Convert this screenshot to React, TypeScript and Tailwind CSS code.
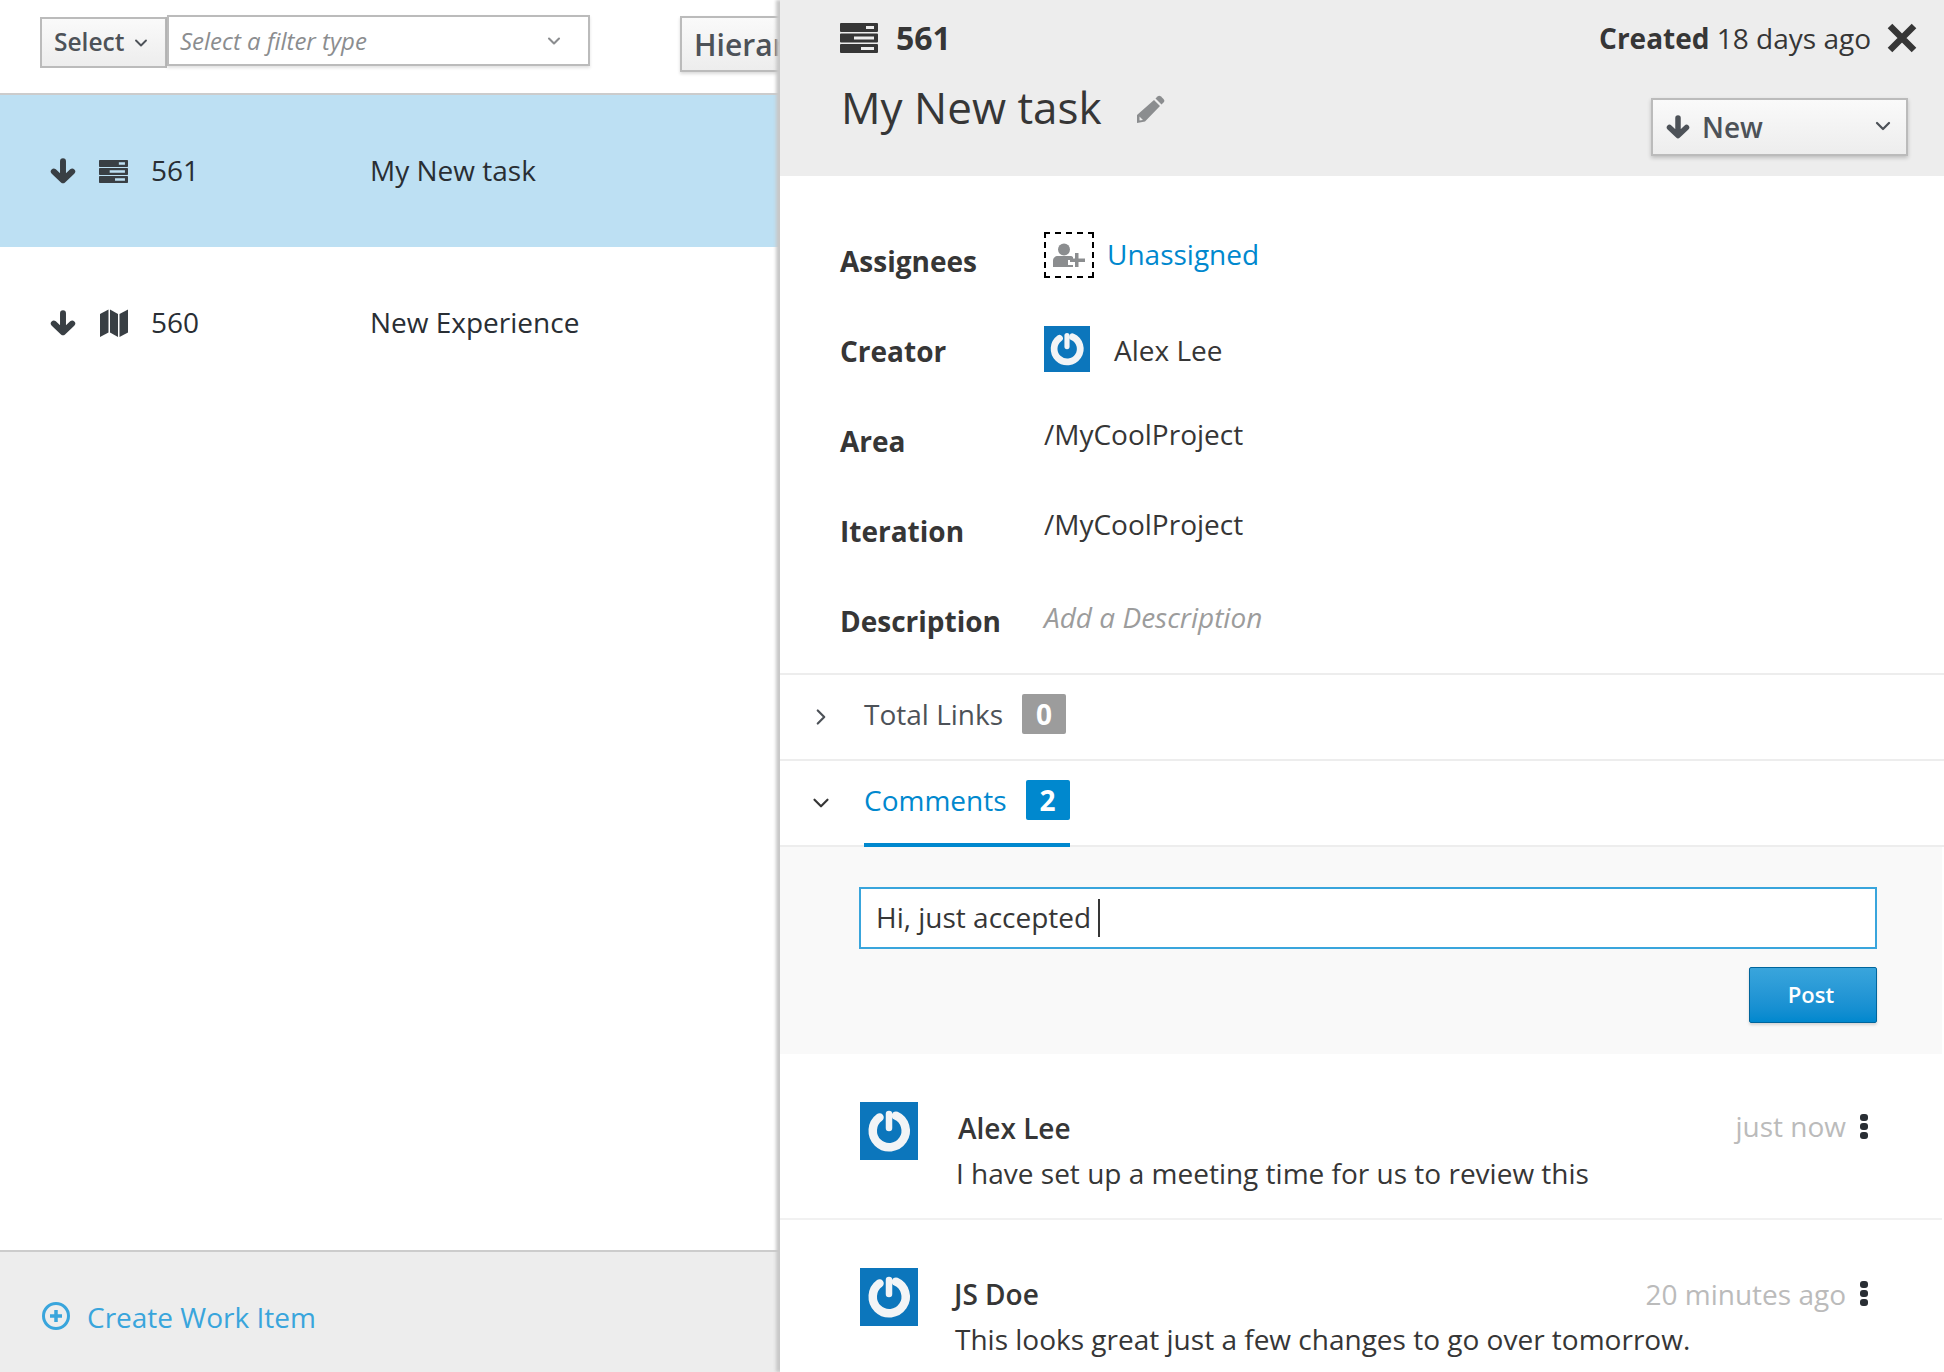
import { ChevronDown, ChevronRight } from "lucide-react";

function ServerIcon({ className }: { className?: string }) {
  return (
    <svg viewBox="0 0 38 30" className={className} fill="currentColor">
      <path fillRule="evenodd" d="M1 0h36a1 1 0 0 1 1 1v7a1 1 0 0 1-1 1H1a1 1 0 0 1-1-1V1a1 1 0 0 1 1-1zm25 3v3h8V3z" />
      <path fillRule="evenodd" d="M1 10.500h36a1 1 0 0 1 1 1v7a1 1 0 0 1-1 1H1a1 1 0 0 1-1-1v-7a1 1 0 0 1 1-1zm13 3v3h20v-3z" />
      <path fillRule="evenodd" d="M1 21h36a1 1 0 0 1 1 1v7a1 1 0 0 1-1 1H1a1 1 0 0 1-1-1v-7a1 1 0 0 1 1-1zm20 3v3h13v-3z" />
    </svg>
  );
}

function ArrowDownIcon({ className }: { className?: string }) {
  return (
    <svg viewBox="0 0 24 24" className={className} fill="none" stroke="currentColor" strokeWidth="5.5" strokeLinecap="round" strokeLinejoin="round">
      <path d="M12 3v17M3.500 12.500 12 20.500l8.500-8" />
    </svg>
  );
}

function MapIcon({ className }: { className?: string }) {
  return (
    <svg viewBox="0 0 28 28" className={className} fill="currentColor">
      <path d="M0 5 8.500.5v23L0 28z" />
      <path d="M10 .5 18 5v23l-8-4.500z" />
      <path d="M19.500 5 28 .5v23L19.500 28z" />
    </svg>
  );
}

function PencilIcon({ className }: { className?: string }) {
  return (
    <svg viewBox="0 0 28 28" className={className} fill="currentColor">
      <path d="M20.500 1.500a2.500 2.500 0 0 1 3.500 0l2.500 2.500a2.500 2.500 0 0 1 0 3.500l-2 2-6-6z" />
      <path fillRule="evenodd" d="M17 5l6 6L8 26.500 0 28v-8zM2.500 21.500v4l3.500-.5z" />
    </svg>
  );
}

function Avatar({ className }: { className?: string }) {
  return (
    <div className={`flex items-center justify-center bg-[#0c76bc] shrink-0 ${className}`}>
      <svg viewBox="0 0 58 58" className="w-full h-full blur-[0.4px]" fill="none" stroke="#f2f4f6" strokeLinecap="round">
        <path d="M21 14.500a16.500 16.500 0 1 0 16.500 0" strokeWidth="8.500" transform="rotate(-6 29 29)" />
        <path d="M29 12v14" strokeWidth="6.500" />
      </svg>
    </div>
  );
}

function UserPlusIcon() {
  return (
    <svg viewBox="0 0 32 24" className="w-[32px] h-[24px]" fill="#8b8d8f">
      <circle cx="11" cy="6.500" r="6" />
      <path d="M0 24v-6c0-3 2-5 5-5h12c1.500 0 2.500.5 3 1v3h-5v5h5v2z" />
      <path d="M22 10h3.500v5.500H32V19h-6.500v5H22v-5h-5v-3.500h5z" />
    </svg>
  );
}

function Kebab() {
  return (
    <div className="flex flex-col gap-[2px] w-[8px] shrink-0">
      <span className="h-[7px] w-[8px] rounded-[3px] bg-[#292e34]" />
      <span className="h-[7px] w-[8px] rounded-[3px] bg-[#292e34]" />
      <span className="h-[7px] w-[8px] rounded-[3px] bg-[#292e34]" />
    </div>
  );
}

const workItems = [
  { id: "561", title: "My New task", selected: true },
  { id: "560", title: "New Experience", selected: false },
];

function DetailRow({ label, children }: { label: string; children: React.ReactNode }) {
  return (
    <div className="flex items-center h-[90px]">
      <div className="w-[204px] text-[28px] font-bold text-[#363636]">{label}</div>
      {children}
    </div>
  );
}

function Comment({ name, time, body, nameClass, bodyClass, timeClass, rowClass }: { name: string; time: string; body: string; nameClass: string; bodyClass: string; timeClass: string; rowClass: string }) {
  return (
    <div className={`flex pl-[80px] pr-[74px] pt-[48px] mr-[2px] shrink-0 ${rowClass}`}>
      <Avatar className="w-[58px] h-[58px]" />
      <div className="flex-1 min-w-0">
        <div className="flex items-center justify-between h-[50px] mt-[1px]">
          <div className={`text-[28px] font-semibold text-[#363636] ${nameClass}`}>{name}</div>
          <div className={`flex items-center gap-[14px] ${timeClass}`}>
            <span className="text-[28px] text-[#bbbbbb]">{time}</span>
            <Kebab />
          </div>
        </div>
        <div className={`text-[28px] leading-[38px] text-[#363636] mt-[1px] ${bodyClass}`}>{body}</div>
      </div>
    </div>
  );
}

export default function App() {
  return (
    <div className="flex w-[1944px] h-[1372px] overflow-hidden bg-white text-[#363636] font-['Open_Sans',sans-serif]">
      <div className="flex flex-col w-[780px] shrink-0 overflow-hidden">
        <div className="flex items-start h-[95px] pl-[40px] border-b-2 border-[#cccccc] shrink-0">
          <button className="flex items-center gap-[7px] h-[51px] w-[127px] mt-[17px] pl-[12px] border-2 border-[#bbbbbb] bg-gradient-to-b from-[#fafafa] to-[#ededed] text-[24.500px] font-semibold text-[#4d5258] shrink-0">
            Select
            <ChevronDown size={20} strokeWidth={2.25} className="shrink-0" />
          </button>
          <div className="flex items-center justify-between h-[51px] w-[423px] mt-[15px] pl-[11px] pr-[24px] border-2 border-[#bbbbbb] bg-white shadow-[0_2px_3px_rgba(0,0,0,0.12)] text-[24px] italic text-[#8b8d8f] shrink-0">
            Select a filter type
            <ChevronDown size={20} strokeWidth={2.5} />
          </div>
          <button className="h-[56px] w-[200px] ml-[90px] mt-[16px] pl-[12px] text-left border-2 border-[#bbbbbb] bg-gradient-to-b from-[#fafafa] to-[#ededed] shadow-[0_2px_3px_rgba(0,0,0,0.15)] text-[30px] font-semibold text-[#4d5258] shrink-0">
            Hierarchy
          </button>
        </div>

        {workItems.map((item) => (
          <div key={item.id} className={`flex items-center h-[152px] shrink-0 pl-[50px] text-[#292e34] ${item.selected ? "bg-[#bde0f3]" : "bg-white"}`}>
            <ArrowDownIcon className="w-[26px] h-[26px] text-[#393f44]" />
            <div className="w-[29px] flex justify-center ml-[23px] text-[#393f44]">
              {item.selected ? <ServerIcon className="w-[29px] h-[23px]" /> : <MapIcon className="w-[28px] h-[28px]" />}
            </div>
            <div className="w-[219px] ml-[23px] text-[28px] mt-[-2px]">{item.id}</div>
            <div className="text-[28px] mt-[-2px]">{item.title}</div>
          </div>
        ))}

        <div className="mt-auto flex items-center gap-[17px] h-[122px] pl-[42px] pt-[9px] border-t-2 border-[#cccccc] bg-[#ededed] text-[#39a5dc] text-[28px] shrink-0">
          <svg viewBox="0 0 28 28" className="w-[28px] h-[28px] mt-[-1px]" fill="none" stroke="currentColor">
            <circle cx="14" cy="14" r="12.500" strokeWidth="3" />
            <path d="M14 8v12M8 14h12" strokeWidth="3.500" />
          </svg>
          Create Work Item
        </div>
      </div>

      <div className="relative z-10 flex flex-col flex-1 min-w-0 bg-white shadow-[-4px_0_3px_#c8c8c8]">
        <div className="flex justify-between h-[176px] bg-[#ededed] pl-[60px] pr-[27px] shrink-0">
          <div>
            <div className="flex items-center gap-[18px] h-[38px] mt-[19px] text-[#363636]">
              <ServerIcon className="w-[38px] h-[30px]" />
              <span className="text-[32px] font-bold">561</span>
            </div>
            <div className="flex items-center mt-[20px] ml-[1px]">
              <span className="text-[44px] leading-[60px] text-[#363636]">My New task</span>
              <PencilIcon className="w-[28px] h-[28px] ml-[35px] mt-[4px] text-[#8b8d8f]" />
            </div>
          </div>
          <div className="flex flex-col items-end">
            <div className="flex items-center h-[40px] mt-[18px] gap-[16px]">
              <span className="text-[28px] text-[#363636]">
                <span className="font-bold">Created</span> 18 days ago
              </span>
              <svg viewBox="0 0 30 30" className="w-[30px] h-[30px]" fill="none" stroke="#363636" strokeWidth="6.500">
                <path d="M3 3l24 24M27 3 3 27" />
              </svg>
            </div>
            <div className="flex items-center justify-between w-[257px] h-[58px] mt-[40px] mr-[9px] pl-[13px] pr-[11px] border-2 border-[#bbbbbb] bg-gradient-to-b from-[#fafafa] to-[#ededed] shadow-[0_2px_4px_rgba(0,0,0,0.2)] text-[#4d5258]">
              <span className="flex items-center gap-[12px] text-[28px] font-semibold">
                <ArrowDownIcon className="w-[24px] h-[24px]" />
                New
              </span>
              <ChevronDown size={24} strokeWidth={2.25} className="mt-[-3px]" />
            </div>
          </div>
        </div>

        <div className="h-[499px] pt-[40px] pl-[60px] border-b-2 border-[#ededed] shrink-0">
          <DetailRow label="Assignees">
            <div className="flex items-center gap-[13px] mt-[-13px]">
              <div className="flex items-center justify-center w-[50px] h-[46px] border-2 border-dashed border-black">
                <UserPlusIcon />
              </div>
              <span className="text-[28px] text-[#0088ce] mt-[-2px]">Unassigned</span>
            </div>
          </DetailRow>
          <DetailRow label="Creator">
            <Avatar className="w-[46px] h-[46px] mt-[-5px]" />
            <span className="text-[28px] ml-[24px] mt-[-3px]">Alex Lee</span>
          </DetailRow>
          <DetailRow label="Area">
            <span className="text-[28px] mt-[-14px]">/MyCoolProject</span>
          </DetailRow>
          <DetailRow label="Iteration">
            <span className="text-[28px] mt-[-14px]">/MyCoolProject</span>
          </DetailRow>
          <DetailRow label="Description">
            <span className="text-[28px] italic text-[#9c9c9c] mt-[-8px]">Add a Description</span>
          </DetailRow>
        </div>

        <div className="flex items-center h-[86px] border-b-2 border-[#ededed] text-[#4d5258] shrink-0">
          <ChevronRight size={26} strokeWidth={2} className="ml-[28px] mt-[-1px]" />
          <span className="text-[28px] ml-[30px] mt-[-6px]">Total Links</span>
          <span className="flex items-center justify-center w-[44px] h-[40px] ml-[19px] mt-[-6px] rounded-[2px] bg-[#9c9c9c] text-white text-[28px] font-bold">0</span>
        </div>

        <div className="relative flex items-center h-[86px] border-b-2 border-[#ededed] shrink-0">
          <ChevronDown size={26} strokeWidth={2} className="ml-[28px] mt-[-1px] text-[#363636]" />
          <div className="flex items-center ml-[30px] text-[#0088ce]">
            <span className="text-[28px] mt-[-6px]">Comments</span>
            <span className="flex items-center justify-center w-[44px] h-[40px] ml-[19px] mt-[-6px] rounded-[2px] bg-[#0088ce] text-white text-[28px] font-bold">2</span>
          </div>
          <div className="absolute left-[84px] bottom-[-2px] w-[206px] h-[4px] bg-[#0088ce]" />
        </div>

        <div className="h-[207px] bg-[#f9f9f9] pt-[40px] pl-[79px] pr-[65px] mr-[2px] shrink-0">
          <div className="flex items-center h-[62px] pl-[15px] border-2 border-[#39a5dc] bg-white text-[28px] text-[#363636]">
            <span className="mt-[-2px]">Hi, just accepted</span>
            <span className="w-[2px] h-[38px] ml-[7px] bg-[#363636]" />
          </div>
          <div className="flex justify-end mt-[18px]">
            <button className="w-[128px] h-[56px] pr-[4px] pb-[2px] rounded-[2px] border border-[#00659c] bg-gradient-to-b from-[#39a5dc] to-[#0088ce] text-white text-[22px] font-semibold shadow-[0_2px_3px_rgba(0,0,0,0.15)]">
              Post
            </button>
          </div>
        </div>

        <Comment
          name="Alex Lee"
          time="just now"
          body="I have set up a meeting time for us to review this"
          nameClass="ml-[40px]"
          bodyClass="ml-[38px]"
          timeClass="mt-[-4px]"
          rowClass="h-[166px] border-b-2 border-[#f1f1f1]"
        />
        <Comment
          name="JS Doe"
          time="20 minutes ago"
          body="This looks great just a few changes to go over tomorrow."
          nameClass="ml-[36px]"
          bodyClass="ml-[37px]"
          timeClass="mt-[-1px]"
          rowClass="h-[152px]"
        />
      </div>
    </div>
  );
}
